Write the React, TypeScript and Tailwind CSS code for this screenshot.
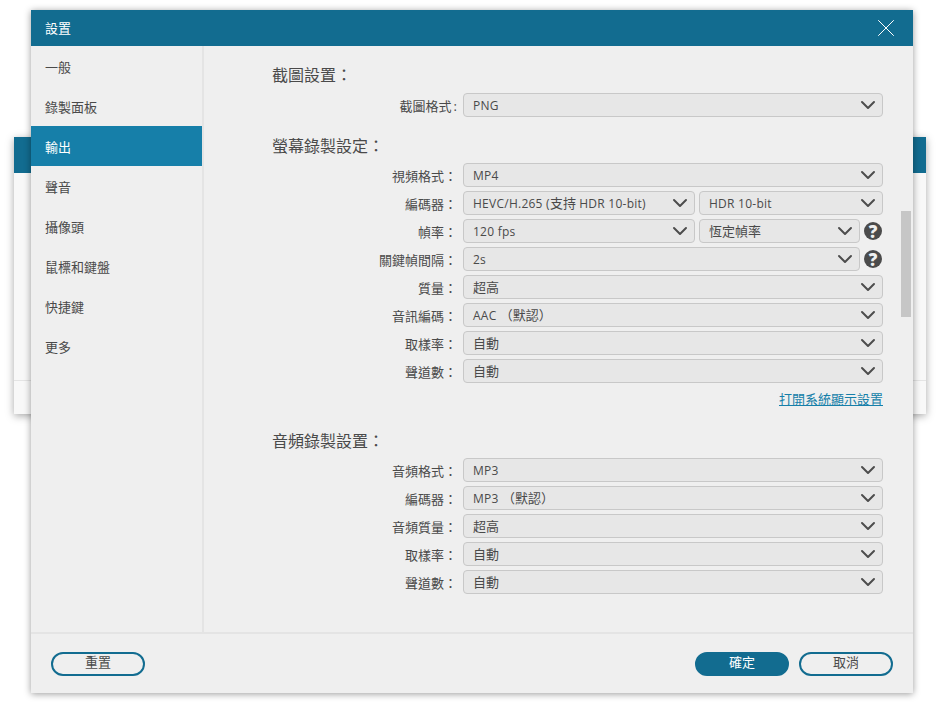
import { ChevronDown, X } from 'lucide-react';

const FONT = "font-['Open_Sans','Noto_Sans_CJK_TC',sans-serif]";

const menuItems = ['一般', '錄製面板', '輸出', '聲音', '攝像頭', '鼠標和鍵盤', '快捷鍵', '更多'];

function Select({ value, className }: { value: string; className?: string }) {
  // the CJK runs sit a point larger than the latin text
  const parts = value.split(/([\u3000-\u9fff\uff00-\uffef]+)/);
  return (
    <div className={`flex h-6 items-center justify-between rounded-[4px] border border-[#c8c8c8] bg-[#e7e7e7] pr-[2px] pl-[9px] text-[12px] text-[#4a4a4a] ${className ?? 'flex-1'}`}>
      <span className="pt-[2px] whitespace-nowrap tracking-[0.25px]">
        {parts.map((part, i) =>
          i % 2 ? (
            <span key={i} className="text-[13px] tracking-normal">
              {part}
            </span>
          ) : (
            part
          ),
        )}
      </span>
      <ChevronDown size={24} strokeWidth={2} className="shrink-0 text-[#4d4d4d]" />
    </div>
  );
}

function HelpIcon() {
  return (
    <div className="mr-px ml-1 flex h-[18px] w-[18px] shrink-0 items-center justify-center rounded-full bg-[#4b4b4b] text-[17px] leading-none font-extrabold text-[#efefef]">
      ?
    </div>
  );
}

function Row({ label, children, colon = '：' }: { label: string; children: React.ReactNode; colon?: string }) {
  return (
    <div className="flex h-6 items-center">
      <div className="w-[192px] pt-1 pr-[6px] text-right text-[13px] whitespace-nowrap text-[#4a4a4a]">
        {label}
        <span className={colon === ':' ? 'ml-[2px]' : ''}>{colon}</span>
      </div>
      <div className="flex flex-1 items-center gap-1">{children}</div>
    </div>
  );
}

function Title({ children, className }: { children: string; className?: string }) {
  return <div className={`h-6 pl-px text-[16px] leading-6 text-[#4a4a4a] ${className ?? ''}`}>{children}</div>;
}

function PillButton({ children, primary }: { children: string; primary?: boolean }) {
  return (
    <button
      className={`h-6 w-[94px] rounded-full border-2 border-[#126c90] pb-[3px] text-[13px] leading-none ${
        primary ? 'bg-[#126c90] text-white' : 'text-[#4a4a4a]'
      }`}
    >
      {children}
    </button>
  );
}

export default function App() {
  return (
    <div className={`relative h-[718px] w-[939px] overflow-hidden bg-white ${FONT}`}>
      {/* window behind the settings dialog */}
      <div className="absolute top-[137px] left-[14px] flex h-[277px] w-[912px] flex-col bg-[#f8f8f8] shadow-[0_2px_8px_rgba(0,0,0,0.35)]">
        <div className="h-9 bg-[#126c90]" />
        <div className="mt-[207px] border-t border-[#e4e4e4]" />
      </div>

      {/* settings dialog */}
      <div className="absolute top-[10px] left-[31px] flex h-[683px] w-[882px] flex-col bg-[#efefef] shadow-[0_1px_7px_rgba(0,0,0,0.4)]">
        <div className="flex h-9 shrink-0 items-center justify-between bg-[#126c90] pr-[12px] pl-[14px] text-[13px] text-white">
          <span className="pt-px">設置</span>
          <X size={30} strokeWidth={0.8} className="-my-1 text-white" />
        </div>

        <div className="flex min-h-0 flex-1">
          <div className="w-[173px] shrink-0 border-r-2 border-[#e4e4e4]">
            {menuItems.map((item) => (
              <div
                key={item}
                className={`flex h-10 items-center pt-1 pl-[14px] text-[13px] ${
                  item === '輸出' ? 'bg-[#167fa9] text-white' : 'text-[#4a4a4a]'
                }`}
              >
                {item}
              </div>
            ))}
          </div>

          <div className="relative flex-1 pt-[17px] pr-[30px] pl-[67px]">
            <Title>截圖設置：</Title>
            <div className="mt-[6px]">
              <Row label="截圖格式" colon=":">
                <Select value="PNG" />
              </Row>
            </div>

            <Title className="mt-[17px]">螢幕錄製設定：</Title>
            <div className="mt-[5px] flex flex-col gap-1">
              <Row label="視頻格式">
                <Select value="MP4" />
              </Row>
              <Row label="編碼器">
                <Select value="HEVC/H.265 (支持 HDR 10-bit)" className="w-[232px] shrink-0" />
                <Select value="HDR 10-bit" />
              </Row>
              <Row label="幀率">
                <Select value="120 fps" className="w-[232px] shrink-0" />
                <div className="flex flex-1 items-center">
                  <Select value="恆定幀率" />
                  <HelpIcon />
                </div>
              </Row>
              <Row label="關鍵幀間隔">
                <div className="flex flex-1 items-center">
                  <Select value="2s" />
                  <HelpIcon />
                </div>
              </Row>
              <Row label="質量">
                <Select value="超高" />
              </Row>
              <Row label="音訊編碼">
                <Select value="AAC （默認）" />
              </Row>
              <Row label="取樣率">
                <Select value="自動" />
              </Row>
              <Row label="聲道數">
                <Select value="自動" />
              </Row>
            </div>

            <div className="mt-[6px] h-5 text-right text-[13px] leading-5 text-[#167fa9] underline">打開系統顯示設置</div>

            <Title className="mt-[20px]">音頻錄製設置：</Title>
            <div className="mt-[5px] flex flex-col gap-1">
              <Row label="音頻格式">
                <Select value="MP3" />
              </Row>
              <Row label="編碼器">
                <Select value="MP3 （默認）" />
              </Row>
              <Row label="音頻質量">
                <Select value="超高" />
              </Row>
              <Row label="取樣率">
                <Select value="自動" />
              </Row>
              <Row label="聲道數">
                <Select value="自動" />
              </Row>
            </div>

            {/* scrollbar thumb */}
            <div className="absolute top-[165px] right-[2px] h-[106px] w-[10px] bg-[#c6c6c6]" />
          </div>
        </div>

        <div className="flex h-[61px] shrink-0 items-center justify-between border-t-2 border-[#e4e4e4] pr-5 pl-5">
          <PillButton>重置</PillButton>
          <div className="flex gap-[10px]">
            <PillButton primary>確定</PillButton>
            <PillButton>取消</PillButton>
          </div>
        </div>
      </div>
    </div>
  );
}
